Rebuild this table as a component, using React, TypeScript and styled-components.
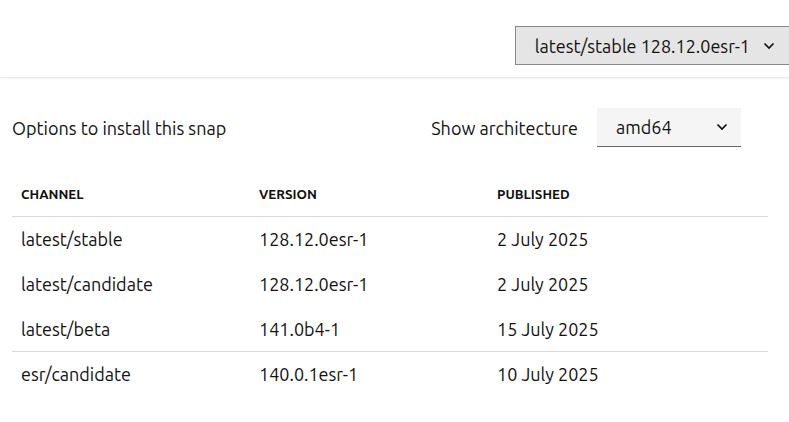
import React from 'react'
import styled, { createGlobalStyle } from 'styled-components'

const GlobalStyle = createGlobalStyle`
  html, body {
    margin: 0;
    padding: 0;
    background: #fff;
    overflow-x: hidden;
  }
  body {
    font-family: Ubuntu, "Open Sans", "Noto Sans", sans-serif;
    font-size: 18px;
    color: #111;
    -webkit-font-smoothing: antialiased;
  }
`

interface Release {
  channel: string
  version: string
  published: string
  divider?: boolean
}

const releases: Release[] = [
  { channel: 'latest/stable', version: '128.12.0esr-1', published: '2 July 2025' },
  { channel: 'latest/candidate', version: '128.12.0esr-1', published: '2 July 2025' },
  { channel: 'latest/beta', version: '141.0b4-1', published: '15 July 2025', divider: true },
  { channel: 'esr/candidate', version: '140.0.1esr-1', published: '10 July 2025' },
]

const Chevron = ({ className }: { className?: string }) => (
  <svg className={className} width="12" height="8" viewBox="0 0 12 8" fill="none">
    <path d="M1.5 1.5 6 6l4.5-4.5" stroke="#111" strokeWidth="1.7" />
  </svg>
)

const TopBar = styled.header`
  display: flex;
  justify-content: flex-end;
  align-items: flex-start;
  height: 78px;
  padding-top: 26px;
  box-sizing: border-box;
  border-bottom: 1px solid #ececec;
  box-shadow: 0 1px 2px rgba(0, 0, 0, 0.06);
`

const ChannelButton = styled.button`
  display: flex;
  align-items: center;
  gap: 13px;
  height: 39px;
  margin-right: -24px;
  padding: 0 37px 0 19px;
  background: #e5e5e5;
  border: 1px solid #8a8a8a;
  border-radius: 0;
  font: inherit;
  color: #111;
`

const Content = styled.main`
  padding: 30px 21px 0 12px;
`

const OptionsRow = styled.div`
  display: flex;
  align-items: center;
  justify-content: space-between;
  padding-right: 27px;
`

const ArchGroup = styled.div`
  display: flex;
  align-items: center;
  gap: 19px;
`

const Select = styled.div`
  display: flex;
  align-items: center;
  justify-content: space-between;
  width: 144px;
  height: 39px;
  box-sizing: border-box;
  padding: 0 13px 0 19px;
  background: #f5f5f5;
  border-bottom: 1px solid #666;
`

const Table = styled.div`
  margin-top: 25px;
`

const Row = styled.div<{ $divider?: boolean; $header?: boolean }>`
  display: grid;
  grid-template-columns: 238px 238px 1fr;
  align-items: center;
  height: 45px;
  box-sizing: border-box;
  padding-left: 9px;
  border-bottom: 1px solid ${({ $divider, $header }) => ($divider || $header ? '#d9d9d9' : 'transparent')};
  font-size: ${({ $header }) => ($header ? '13.3px' : '18px')};
  font-weight: ${({ $header }) => ($header ? 700 : 400)};
  text-transform: ${({ $header }) => ($header ? 'uppercase' : 'none')};
`

export default function App() {
  return (
    <>
      <GlobalStyle />
      <TopBar>
        <ChannelButton>
          latest/stable 128.12.0esr-1
          <Chevron />
        </ChannelButton>
      </TopBar>
      <Content>
        <OptionsRow>
          <span>Options to install this snap</span>
          <ArchGroup>
            <span>Show architecture</span>
            <Select>
              amd64
              <Chevron />
            </Select>
          </ArchGroup>
        </OptionsRow>
        <Table>
          <Row $header>
            <span>Channel</span>
            <span>Version</span>
            <span>Published</span>
          </Row>
          {releases.map((r) => (
            <Row key={r.channel} $divider={r.divider}>
              <span>{r.channel}</span>
              <span>{r.version}</span>
              <span>{r.published}</span>
            </Row>
          ))}
        </Table>
      </Content>
    </>
  )
}
